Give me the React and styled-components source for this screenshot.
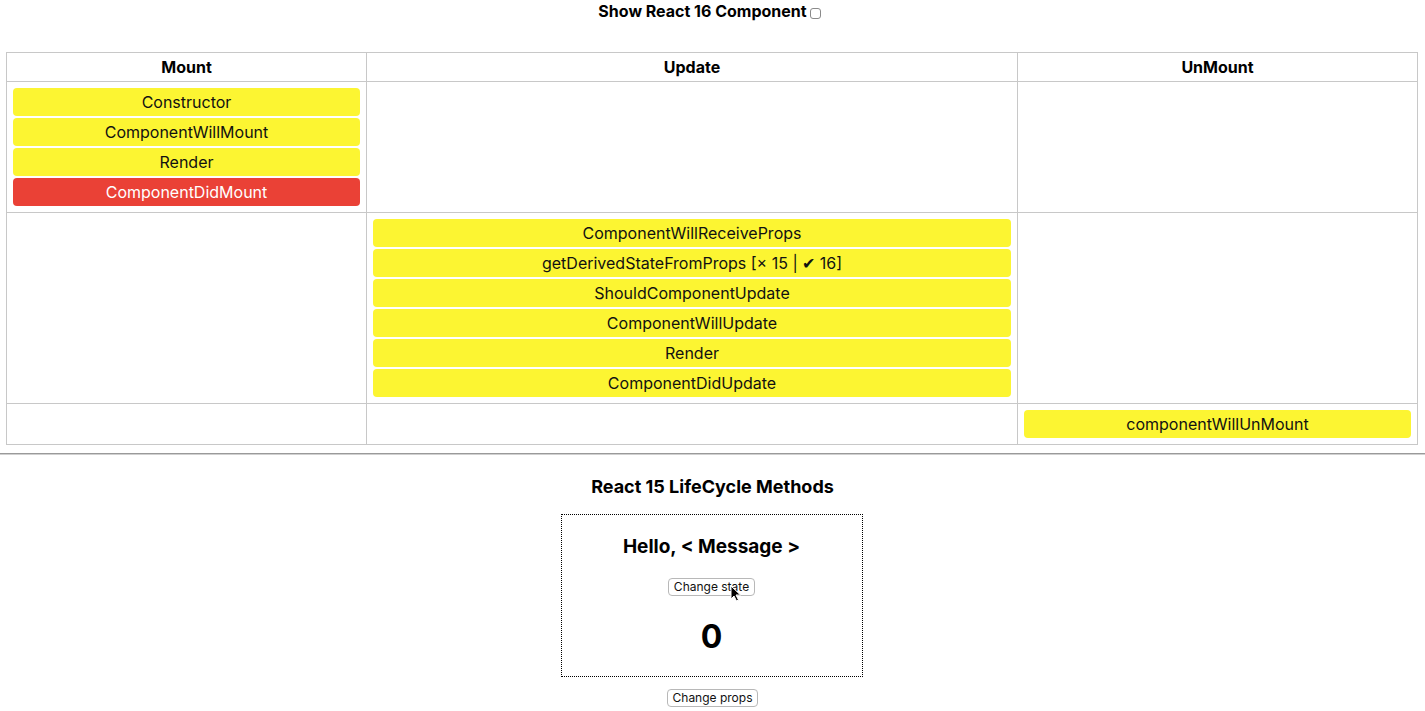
import React, { useState } from 'react';
import styled, { createGlobalStyle } from 'styled-components';

const GlobalStyle = createGlobalStyle`
  body {
    margin: 0;
    background: #fff;
    font-family: Inter, "Liberation Sans", sans-serif;
    color: #000;
  }
`

const Page = styled.div`
  display: flex;
  flex-direction: column;
  padding-top: 2px;
`

const Toggle = styled.label`
  display: flex;
  justify-content: center;
  align-items: center;
  gap: 3px;
  margin-left: -6px;
  font-size: 16px;
  font-weight: 700;
  line-height: 19px;
  height: 19px;
`

const Check = styled.input.attrs({ type: 'checkbox' })`
  appearance: none;
  width: 11px;
  height: 11px;
  margin: 3px 0 0 0;
  border: 1px solid #8a8a8a;
  border-radius: 3px;
  background: #fff;
`

const Table = styled.table`
  border-collapse: collapse;
  margin: 31px 0 0 6px;
  width: 1410px;
  table-layout: fixed;
`

const Th = styled.th`
  border: 1px solid #c8c8c8;
  height: 28px;
  padding: 0;
  font-size: 16px;
  font-weight: 700;
  text-align: center;
  width: ${p => p.$w}px;
`

const Td = styled.td`
  border: 1px solid #c8c8c8;
  padding: 6px;
  vertical-align: top;
`

const Stack = styled.div`
  display: flex;
  flex-direction: column;
  gap: 2px;
`

const Method = styled.div`
  height: 28px;
  line-height: 28px;
  border-radius: 4px;
  text-align: center;
  font-size: 16px;
  background: ${p => (p.$active ? '#ea4136' : '#fcf532')};
  color: ${p => (p.$active ? '#fff' : '#111')};
`

const Rule = styled.hr`
  margin: 8px 0 0;
  border: 0;
  border-top: 1px solid #9a9a9a;
  border-bottom: 1px solid #d0d0d0;
`

const Heading = styled.h2`
  margin: 21px 0 0;
  text-align: center;
  font-size: 18px;
  font-weight: 700;
  line-height: 22px;
`

const Box = styled.div`
  align-self: center;
  margin: 16px 0 0 -2px;
  width: 300px;
  height: 161px;
  border: 1px dotted #000;
  display: flex;
  flex-direction: column;
  align-items: center;
`

const Hello = styled.h3`
  margin: 20px 0 0;
  font-size: 19px;
  font-weight: 700;
  line-height: 23px;
`

const ButtonWrap = styled.div`
  position: relative;
  display: flex;
  margin-top: ${p => p.$mt}px;
  align-self: center;
`

const Button = styled.button`
  font-family: Inter, "Liberation Sans", sans-serif;
  font-size: 12px;
  line-height: 14px;
  height: 18px;
  padding: 0 5px;
  background: #fff;
  color: #111;
  border: 1px solid #b8b8b8;
  border-radius: 4px;
`

const Cursor = styled.svg`
  position: absolute;
  left: 62px;
  top: 7px;
`

const Count = styled.div`
  margin-top: 22px;
  font-size: 32px;
  font-weight: 700;
  line-height: 38px;
`

const mount = ['Constructor', 'ComponentWillMount', 'Render', 'ComponentDidMount']
const update = [
  'ComponentWillReceiveProps',
  'getDerivedStateFromProps [× 15 | ✔ 16]',
  'ShouldComponentUpdate',
  'ComponentWillUpdate',
  'Render',
  'ComponentDidUpdate',
]

function Methods({ items, active }) {
  return (
    <Stack>
      {items.map(m => (
        <Method key={m} $active={m === active}>{m}</Method>
      ))}
    </Stack>
  )
}

export default function App() {
  const [show, setShow] = useState(false)
  const [count, setCount] = useState(0)

  return (
    <Page>
      <GlobalStyle />
      <Toggle>
        Show React 16 Component
        <Check checked={show} onChange={e => setShow(e.target.checked)} />
      </Toggle>
      <Table>
        <thead>
          <tr>
            <Th $w={359}>Mount</Th>
            <Th $w={650}>Update</Th>
            <Th $w={399}>UnMount</Th>
          </tr>
        </thead>
        <tbody>
          <tr>
            <Td><Methods items={mount} active="ComponentDidMount" /></Td>
            <Td />
            <Td />
          </tr>
          <tr>
            <Td />
            <Td><Methods items={update} /></Td>
            <Td />
          </tr>
          <tr>
            <Td />
            <Td />
            <Td><Methods items={['componentWillUnMount']} /></Td>
          </tr>
        </tbody>
      </Table>
      <Rule />
      <Heading>React 15 LifeCycle Methods</Heading>
      <Box>
        <Hello>Hello, &lt; Message &gt;</Hello>
        <ButtonWrap $mt={20}>
          <Button onClick={() => setCount(count + 1)}>Change state</Button>
          <Cursor width="12" height="17" viewBox="0 0 12 17">
            <path d="M1 1 L1 14 L4 11 L6.5 16 L8.5 15 L6 10 L10.5 10 Z" fill="#000" stroke="#fff" strokeWidth="1" />
          </Cursor>
        </ButtonWrap>
        <Count>{count}</Count>
      </Box>
      <ButtonWrap $mt={12}>
        <Button>Change props</Button>
      </ButtonWrap>
    </Page>
  )
}
